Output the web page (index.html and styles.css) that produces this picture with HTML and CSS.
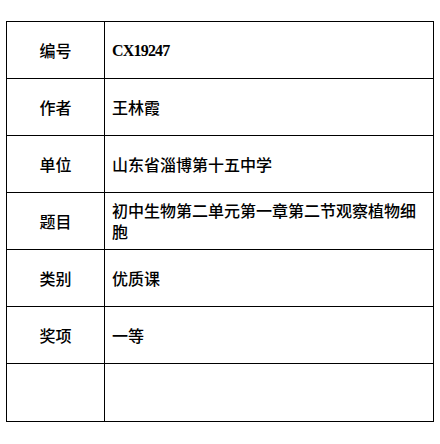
FILE: index.html
```html
<!DOCTYPE html>
<html lang="zh">
<head>
<meta charset="utf-8">
<link rel="stylesheet" href="styles.css">
</head>
<body>
<table class="info">
  <tr><td class="label">编号</td><td class="value"><span class="code">CX19247</span></td></tr>
  <tr><td class="label">作者</td><td class="value">王林霞</td></tr>
  <tr><td class="label">单位</td><td class="value">山东省淄博第十五中学</td></tr>
  <tr><td class="label">题目</td><td class="value">初中生物第二单元第一章第二节观察植物细胞</td></tr>
  <tr><td class="label">类别</td><td class="value">优质课</td></tr>
  <tr><td class="label">奖项</td><td class="value">一等</td></tr>
  <tr class="last"><td class="label"></td><td class="value"></td></tr>
</table>
</body>
</html>
```
FILE: styles.css
```css
html, body {
  margin: 0;
  padding: 0;
  background: #fff;
}
body {
  padding: 21px 0 0 6px;
  font-family: "Noto Sans CJK SC", "Liberation Sans", sans-serif;
  font-size: 16px;
  font-weight: 500;
  color: #000;
}
.info {
  border-collapse: collapse;
  width: 428px;
  table-layout: fixed;
}
.info td {
  border: 1px solid #000;
  height: 56px;
  padding: 0;
  line-height: 21px;
  vertical-align: middle;
}
.info .last td {
  height: 57px;
}
.label {
  width: 97px;
  text-align: center;
}
.value {
  padding: 0 10px 0 7px !important;
  text-align: left;
}
.code {
  font-family: "Liberation Serif", "DejaVu Serif", serif;
  font-weight: 700;
  letter-spacing: -0.8px;
}
```
